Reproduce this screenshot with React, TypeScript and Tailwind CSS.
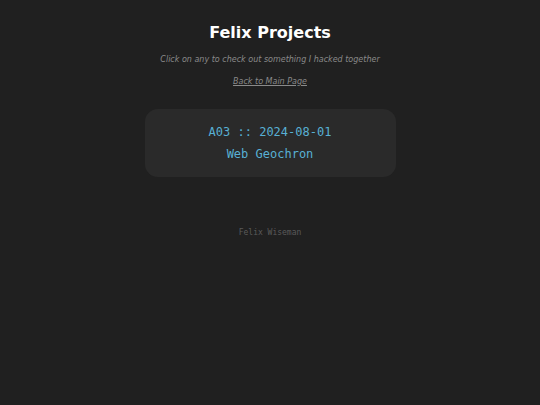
export default function App() {
  return (
    <div className="min-h-[405px] bg-[#202020] text-white flex flex-col items-center" style={{ fontFamily: '"DejaVu Sans", sans-serif' }}>
      <h1 className="mt-[23px] text-[16px] leading-[20px] font-bold text-white">Felix Projects</h1>
      <p className="mt-[11px] text-[8px] leading-[12px] italic text-[#8a8a8a]">
        Click on any to check out something I hacked together
      </p>
      <a href="#" className="mt-[10px] text-[8px] leading-[12px] italic underline text-[#8a8a8a]">
        Back to Main Page
      </a>
      <div className="mt-[21px] w-[251px] h-[68px] rounded-[13px] bg-[#2a2a2a] flex flex-col items-center pt-[15px] font-['DejaVu_Sans_Mono',monospace] text-[12px] leading-[16px] text-[#58b0d4]">
        <div>A03 :: 2024-08-01</div>
        <div className="mt-[6px]">Web Geochron</div>
      </div>
      <footer className="mt-[51px] font-['DejaVu_Sans_Mono',monospace] text-[8px] leading-[10px] text-[#5a5a5a]">
        Felix Wiseman
      </footer>
    </div>
  );
}
